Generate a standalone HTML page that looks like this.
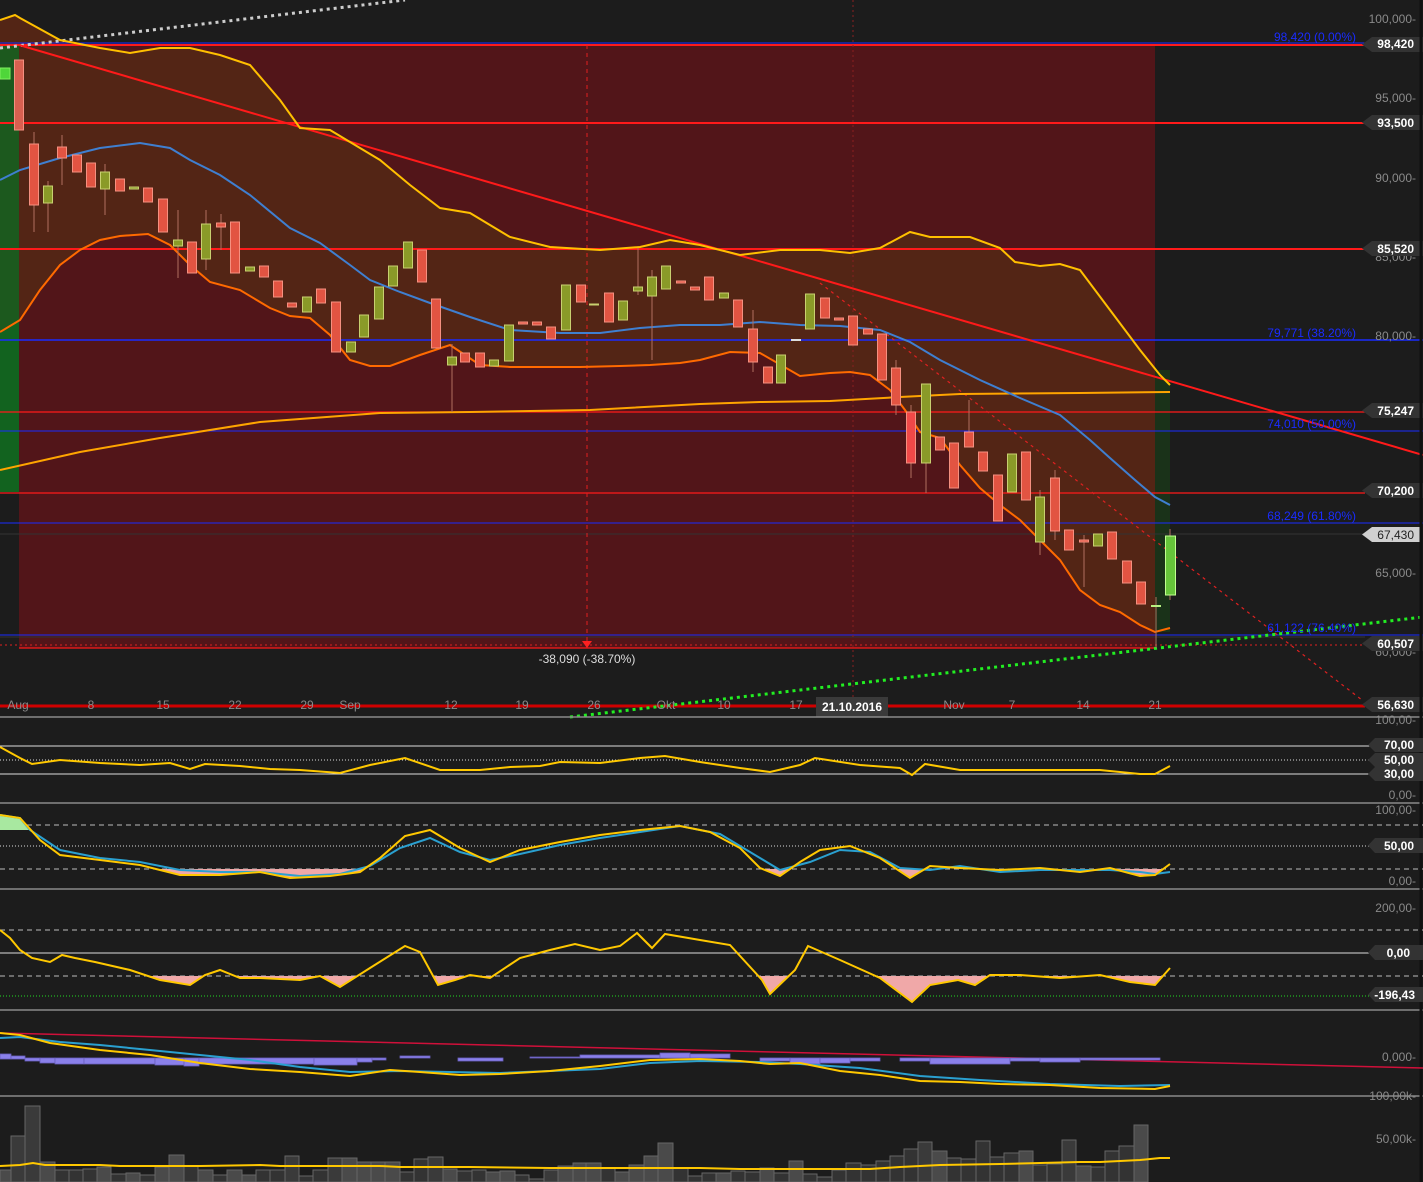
<!DOCTYPE html>
<html><head><meta charset="utf-8"><style>
html,body{margin:0;padding:0;background:#1c1c1c;overflow:hidden;}
svg{display:block}
text{font-family:"Liberation Sans",sans-serif}
.ax{fill:#8a8a8a;font-size:12px;text-anchor:end}
.lb{fill:#fff;font-size:12px;font-weight:bold;text-anchor:end}
.dt{fill:#8a8a8a;font-size:12px;text-anchor:middle}
.fb{fill:#1a2cff;font-size:12px;text-anchor:end}
</style></head><body>
<svg width="1423" height="1182" viewBox="0 0 1423 1182" xmlns="http://www.w3.org/2000/svg">
<defs>
<clipPath id="stc"><rect x="0" y="869" width="1170" height="25"/></clipPath>
<clipPath id="ccc"><rect x="0" y="976" width="1170" height="34"/></clipPath>
</defs>
<rect width="1423" height="1182" fill="#1c1c1c"/>
<rect x="19" y="45" width="1136" height="603" fill="#521519"/>
<rect x="0" y="45" width="19" height="447" fill="#136320"/>
<path d="M0,20 L15,15 L20,18 L20,45 L0,45Z" fill="#173517"/>
<path d="M0,20 L15,15 L20,18 L60,40 L100,48 L130,53 L160,48 L190,48 L220,55 L250,65 L280,100 L300,128 L330,130 L360,148 L380,160 L410,185 L440,208 L470,213 L510,237 L550,247 L600,250 L640,247 L670,240 L700,245 L740,255 L780,250 L820,250 L850,253 L880,248 L910,232 L930,237 L970,237 L1000,248 L1015,262 L1040,266 L1060,264 L1080,270 L1110,310 L1140,350 L1160,375 L1170,385 L1170,628 L1155,632 L1140,625 L1120,612 L1100,605 L1080,590 L1060,560 L1040,540 L1020,520 L1000,505 L980,488 L960,465 L940,438 L920,432 L905,410 L890,390 L870,375 L850,372 L830,373 L800,376 L760,353 L730,352 L700,360 L680,363 L650,365 L620,366 L580,367 L540,367 L510,367 L480,365 L450,345 L420,355 L390,366 L370,366 L350,360 L330,335 L310,318 L290,316 L270,308 L240,290 L210,282 L190,265 L170,245 L148,234 L120,236 L100,240 L80,250 L60,265 L40,290 L20,320 L0,332Z" fill="#532515"/>
<rect x="1155" y="370" width="15" height="262" fill="#1a3219"/>
<rect x="0" y="45" width="19" height="447" fill="#136320" opacity="0.85"/>
<g stroke="#ff1a1a" stroke-width="2">
<line x1="0" y1="45" x2="1365" y2="45"/><line x1="0" y1="123" x2="1365" y2="123"/><line x1="0" y1="249" x2="1365" y2="249"/>
</g>
<g stroke="#ff1a1a" stroke-width="1.3">
<line x1="0" y1="412" x2="1365" y2="412"/><line x1="0" y1="493" x2="1365" y2="493"/><line x1="19" y1="648" x2="1155" y2="648"/>
</g>
<line x1="0" y1="645" x2="1365" y2="645" stroke="#e02020" stroke-width="1" stroke-dasharray="2,3"/>
<line x1="0" y1="706" x2="1365" y2="706" stroke="#d00000" stroke-width="3"/>
<g stroke="#1a2cff" stroke-width="1">
<line x1="0" y1="43" x2="1365" y2="43"/><line x1="0" y1="431" x2="1423" y2="431"/><line x1="0" y1="523" x2="1423" y2="523"/><line x1="0" y1="635" x2="1423" y2="635"/>
</g>
<line x1="0" y1="340" x2="1423" y2="340" stroke="#1a2cff" stroke-width="1.5"/>
<g stroke="#333" stroke-width="1"><line x1="0" y1="534" x2="1365" y2="534"/><line x1="0" y1="637" x2="1365" y2="637"/></g>
<line x1="587" y1="45" x2="587" y2="645" stroke="#e02020" stroke-dasharray="4,4"/>
<line x1="853" y1="0" x2="853" y2="717" stroke="#8a2020" stroke-dasharray="2,3"/>
<path d="M582,641 L592,641 L587,648Z" fill="#ff2020"/>
<text x="587" y="663" fill="#ddd" font-size="12" text-anchor="middle">-38,090 (-38.70%)</text>
<line x1="0" y1="48" x2="405" y2="0" stroke="#ccc" stroke-width="3" stroke-dasharray="3,4"/>
<line x1="19" y1="45" x2="1423" y2="455" stroke="#ff1a1a" stroke-width="2"/>
<line x1="820" y1="283" x2="1362" y2="700" stroke="#e02020" stroke-width="1.2" stroke-dasharray="3,4"/>
<line x1="570" y1="717" x2="1423" y2="617" stroke="#22ee22" stroke-width="3" stroke-dasharray="3,4"/>
<polyline fill="none" stroke="#ffa500" stroke-width="2" points="0,470 80,452 160,438 260,422 380,413 470,412 590,410 700,404 760,402 830,401 900,397 960,394 1080,393 1170,392"/>
<polyline fill="none" stroke="#ffc000" stroke-width="2" points="0,20 15,15 20,18 60,40 100,48 130,53 160,48 190,48 220,55 250,65 280,100 300,128 330,130 360,148 380,160 410,185 440,208 470,213 510,237 550,247 600,250 640,247 670,240 700,245 740,255 780,250 820,250 850,253 880,248 910,232 930,237 970,237 1000,248 1015,262 1040,266 1060,264 1080,270 1110,310 1140,350 1160,375 1170,385"/>
<polyline fill="none" stroke="#3f7fd0" stroke-width="2" points="0,180 20,170 60,158 100,148 140,143 170,148 190,160 220,175 250,195 290,228 320,243 350,265 370,280 400,292 430,303 470,317 510,330 560,333 600,333 640,328 680,325 720,325 760,322 800,325 840,326 880,330 910,342 940,360 980,380 1020,398 1060,415 1090,440 1110,458 1135,480 1155,497 1170,505"/>
<polyline fill="none" stroke="#ff6a00" stroke-width="2" points="0,332 20,320 40,290 60,265 80,250 100,240 120,236 148,234 170,245 190,265 210,282 240,290 270,308 290,316 310,318 330,335 350,360 370,366 390,366 420,355 450,345 480,365 510,367 540,367 580,367 620,366 650,365 680,363 700,360 730,352 760,353 800,376 830,373 850,372 870,375 890,390 905,410 920,432 940,438 960,465 980,488 1000,505 1020,520 1040,540 1060,560 1080,590 1100,605 1120,612 1140,625 1155,632 1170,628"/>
<g stroke="#b07060" stroke-width="1">
<line x1="34" y1="132" x2="34" y2="232"/><line x1="48" y1="181" x2="48" y2="232"/><line x1="62" y1="135" x2="62" y2="185"/><line x1="105" y1="164" x2="105" y2="215"/><line x1="178" y1="210" x2="178" y2="278"/><line x1="206" y1="210" x2="206" y2="270"/><line x1="221" y1="214" x2="221" y2="250"/><line x1="452" y1="344" x2="452" y2="412"/><line x1="638" y1="248" x2="638" y2="295"/><line x1="652" y1="270" x2="652" y2="360"/><line x1="753" y1="310" x2="753" y2="372"/><line x1="926" y1="384" x2="926" y2="493"/><line x1="969" y1="400" x2="969" y2="447"/><line x1="1084" y1="535" x2="1084" y2="587"/><line x1="1156" y1="597" x2="1156" y2="648"/><line x1="1170" y1="529" x2="1170" y2="600"/><line x1="1040" y1="490" x2="1040" y2="555"/><line x1="1055" y1="470" x2="1055" y2="540"/><line x1="896" y1="360" x2="896" y2="415"/><line x1="911" y1="405" x2="911" y2="478"/>
</g>
<g fill="#e25442" stroke="#f59080" stroke-width="1">
<rect x="14.5" y="60" width="9" height="70" fill="#d86050"/>
<rect x="29.5" y="144" width="9" height="61"/><rect x="57.5" y="147" width="9" height="11"/><rect x="72.5" y="155" width="9" height="17"/><rect x="86.5" y="163" width="9" height="24"/><rect x="115.5" y="179" width="9" height="12"/><rect x="143.5" y="188" width="9" height="14"/><rect x="158.5" y="199" width="9" height="33"/><rect x="187.5" y="242" width="9" height="31"/><rect x="216.5" y="223" width="9" height="4"/><rect x="230.5" y="222" width="9" height="51"/><rect x="259.5" y="266" width="9" height="11"/><rect x="273.5" y="281" width="9" height="16"/><rect x="287.5" y="303" width="9" height="4"/><rect x="316.5" y="289" width="9" height="14"/><rect x="331.5" y="302" width="9" height="50"/><rect x="417.5" y="250" width="9" height="32"/><rect x="431.5" y="299" width="9" height="49"/><rect x="460.5" y="353" width="9" height="9"/><rect x="475.5" y="353" width="9" height="14"/><rect x="518.5" y="322" width="9" height="2"/><rect x="532.5" y="322" width="9" height="3"/><rect x="546.5" y="327" width="9" height="12"/><rect x="576.5" y="285" width="9" height="17"/><rect x="604.5" y="293" width="9" height="29"/><rect x="676.5" y="281" width="9" height="2"/><rect x="690.5" y="287" width="9" height="3"/><rect x="704.5" y="277" width="9" height="23"/><rect x="733.5" y="300" width="9" height="27"/><rect x="748.5" y="329" width="9" height="33"/><rect x="763.5" y="367" width="9" height="16"/><rect x="820.5" y="298" width="9" height="20"/><rect x="834.5" y="318" width="9" height="2"/><rect x="848.5" y="316" width="9" height="29"/><rect x="863.5" y="329" width="9" height="5"/><rect x="877.5" y="334" width="9" height="46"/><rect x="891.5" y="368" width="9" height="37"/><rect x="906.5" y="412" width="9" height="51" fill="#f04848"/><rect x="935.5" y="437" width="9" height="13"/><rect x="949.5" y="443" width="9" height="45"/><rect x="964.5" y="432" width="9" height="15"/><rect x="978.5" y="452" width="9" height="19"/><rect x="993.5" y="475" width="9" height="46"/><rect x="1021.5" y="452" width="9" height="48"/><rect x="1050.5" y="478" width="9" height="53"/><rect x="1064.5" y="530" width="9" height="20"/><rect x="1079.5" y="540" width="9" height="2"/><rect x="1107.5" y="532" width="9" height="27"/><rect x="1122.5" y="561" width="9" height="22"/><rect x="1136.5" y="582" width="9" height="22"/>
</g>
<g fill="#8a9a28" stroke="#c8d070" stroke-width="1">
<rect x="43.5" y="186" width="9" height="17"/><rect x="100.5" y="172" width="9" height="17"/><rect x="129.5" y="187" width="9" height="2"/><rect x="173.5" y="240" width="9" height="6"/><rect x="201.5" y="224" width="9" height="35"/><rect x="245.5" y="267" width="9" height="4"/><rect x="302.5" y="297" width="9" height="15"/><rect x="346.5" y="342" width="9" height="10"/><rect x="359.5" y="315" width="9" height="22"/><rect x="374.5" y="287" width="9" height="32"/><rect x="388.5" y="266" width="9" height="20"/><rect x="403.5" y="242" width="9" height="26"/><rect x="447.5" y="357" width="9" height="8"/><rect x="489.5" y="360" width="9" height="6"/><rect x="504.5" y="325" width="9" height="36"/><rect x="561.5" y="285" width="9" height="45"/><rect x="589.5" y="304" width="9" height="1"/><rect x="618.5" y="301" width="9" height="19"/><rect x="633.5" y="287" width="9" height="4"/><rect x="647.5" y="277" width="9" height="19"/><rect x="661.5" y="266" width="9" height="23"/><rect x="719.5" y="293" width="9" height="5"/><rect x="776.5" y="355" width="9" height="28"/><rect x="805.5" y="294" width="9" height="35"/><rect x="921.5" y="384" width="9" height="79"/><rect x="1007.5" y="454" width="9" height="38"/><rect x="1035.5" y="497" width="9" height="45"/><rect x="1093.5" y="534" width="9" height="12"/>
</g>
<rect x="791" y="339" width="10" height="2" fill="#ddd"/>
<rect x="0" y="68" width="10" height="11" fill="#4fd63a" stroke="#80f060"/>
<rect x="1151" y="605" width="10" height="2" fill="#b8f080"/>
<rect x="1165.5" y="536" width="10" height="59" fill="#66c43a" stroke="#c0ff90"/>
<text class="fb" x="1356" y="41">98,420 (0.00%)</text>
<text class="fb" x="1356" y="337">79,771 (38.20%)</text>
<text class="fb" x="1356" y="428">74,010 (50.00%)</text>
<text class="fb" x="1356" y="520">68,249 (61.80%)</text>
<text class="fb" x="1356" y="632">61,122 (76.40%)</text>
<text class="ax" x="1416" y="23">100,000-</text><text class="ax" x="1416" y="102">95,000-</text><text class="ax" x="1416" y="182">90,000-</text><text class="ax" x="1416" y="261">85,000-</text><text class="ax" x="1416" y="340">80,000-</text><text class="ax" x="1416" y="577">65,000-</text><text class="ax" x="1416" y="656">60,000-</text>
<g fill="#333">
<path d="M1372,37 L1423,37 L1423,52 L1372,52 L1362,44.5Z"/><path d="M1372,115 L1423,115 L1423,130 L1372,130 L1362,122.5Z"/><path d="M1372,241 L1423,241 L1423,256 L1372,256 L1362,248.5Z"/><path d="M1372,403 L1423,403 L1423,418 L1372,418 L1362,410.5Z"/><path d="M1372,483 L1423,483 L1423,498 L1372,498 L1362,490.5Z"/><path d="M1372,636 L1423,636 L1423,651 L1372,651 L1362,643.5Z"/><path d="M1372,697 L1423,697 L1423,712 L1372,712 L1362,704.5Z"/>
</g>
<path d="M1372,527 L1420,527 L1420,542 L1372,542 L1362,534.5Z" fill="#d0d0d0"/>
<text class="lb" x="1414" y="48">98,420</text><text class="lb" x="1414" y="127">93,500</text><text class="lb" x="1414" y="253">85,520</text><text class="lb" x="1414" y="415">75,247</text><text class="lb" x="1414" y="495">70,200</text><text x="1414" y="539" font-size="12" text-anchor="end" fill="#222">67,430</text><text class="lb" x="1414" y="648">60,507</text><text class="lb" x="1414" y="709">56,630</text>
<g class="dt"><text x="18" y="709">Aug</text><text x="91" y="709">8</text><text x="163" y="709">15</text><text x="235" y="709">22</text><text x="307" y="709">29</text><text x="350" y="709">Sep</text><text x="451" y="709">12</text><text x="522" y="709">19</text><text x="594" y="709">26</text><text x="666" y="709">Okt</text><text x="724" y="709">10</text><text x="796" y="709">17</text><text x="954" y="709">Nov</text><text x="1012" y="709">7</text><text x="1083" y="709">14</text><text x="1155" y="709">21</text></g>
<rect x="816" y="697" width="72" height="20" fill="#3a3a3a"/>
<text x="852" y="711" fill="#fff" font-size="12" font-weight="bold" text-anchor="middle">21.10.2016</text>
<g stroke="#8a8a8a" stroke-width="1.5"><line x1="0" y1="717" x2="1423" y2="717"/><line x1="0" y1="803" x2="1423" y2="803"/><line x1="0" y1="889" x2="1423" y2="889"/><line x1="0" y1="1010" x2="1423" y2="1010"/><line x1="0" y1="1096" x2="1423" y2="1096"/></g>
<line x1="1421" y1="0" x2="1421" y2="1182" stroke="#111" stroke-width="3"/>
<line x1="0" y1="746" x2="1370" y2="746" stroke="#ddd"/><line x1="0" y1="760" x2="1370" y2="760" stroke="#ddd" stroke-dasharray="1,2"/><line x1="0" y1="774" x2="1370" y2="774" stroke="#ddd"/>
<polyline fill="none" stroke="#ffc800" stroke-width="2" points="0,747 20,758 32,764 60,760 100,763 140,765 170,763 190,769 205,764 240,766 270,769 300,770 340,773 370,765 405,758 440,770 480,770 510,767 540,766 560,762 600,763 640,758 665,756 700,762 740,768 770,772 800,765 815,758 860,765 900,768 912,775 925,764 960,770 1000,770 1040,770 1100,770 1140,774 1155,774 1170,766"/>
<g fill="#333"><path d="M1375,738 L1423,738 L1423,752 L1375,752 L1368,745Z"/><path d="M1375,753 L1423,753 L1423,767 L1375,767 L1368,760Z"/><path d="M1375,767 L1423,767 L1423,781 L1375,781 L1368,774Z"/></g>
<text class="lb" x="1414" y="749">70,00</text><text class="lb" x="1414" y="764">50,00</text><text class="lb" x="1414" y="778">30,00</text>
<text class="ax" x="1416" y="724">100,00-</text><text class="ax" x="1416" y="799">0,00-</text>
<line x1="0" y1="825" x2="1423" y2="825" stroke="#bbb" stroke-dasharray="5,4"/><line x1="0" y1="846" x2="1370" y2="846" stroke="#ddd" stroke-dasharray="1,2"/><line x1="0" y1="869" x2="1423" y2="869" stroke="#bbb" stroke-dasharray="5,4"/>
<path d="M0,815 L20,818 L30,830 L0,830Z" fill="#a8e8a0"/>
<polygon clip-path="url(#stc)" fill="#f0a8a8" points="0,815 20,818 40,840 60,855 100,860 140,865 180,875 220,875 260,872 290,878 330,876 360,872 380,858 405,836 430,830 460,848 490,862 520,850 560,842 600,835 640,830 680,826 710,832 740,848 760,868 780,876 800,862 820,850 850,846 880,858 910,878 930,866 960,868 1000,870 1040,868 1080,872 1110,868 1140,876 1155,875 1170,864 1170,869 0,869"/>
<polyline fill="none" stroke="#2aa0d0" stroke-width="2" points="0,815 20,818 30,830 60,850 100,858 140,862 180,870 220,872 260,872 300,876 340,874 370,866 400,848 430,838 460,852 490,860 520,854 560,845 600,838 640,832 680,826 720,834 750,852 780,870 810,862 840,850 870,852 900,868 930,870 960,866 1000,872 1040,870 1080,870 1110,870 1140,872 1155,874 1170,872"/>
<polyline fill="none" stroke="#ffc800" stroke-width="2" points="0,815 20,818 40,840 60,855 100,860 140,865 180,875 220,875 260,872 290,878 330,876 360,872 380,858 405,836 430,830 460,848 490,862 520,850 560,842 600,835 640,830 680,826 710,832 740,848 760,868 780,876 800,862 820,850 850,846 880,858 910,878 930,866 960,868 1000,870 1040,868 1080,872 1110,868 1140,876 1155,875 1170,864"/>
<path d="M1375,838 L1423,838 L1423,853 L1375,853 L1368,845.5Z" fill="#333"/>
<text class="lb" x="1414" y="850">50,00</text>
<text class="ax" x="1416" y="814">100,00-</text><text class="ax" x="1416" y="885">0,00-</text>
<line x1="0" y1="930" x2="1423" y2="930" stroke="#bbb" stroke-dasharray="5,4"/><line x1="0" y1="953" x2="1370" y2="953" stroke="#ddd"/><line x1="0" y1="976" x2="1423" y2="976" stroke="#bbb" stroke-dasharray="5,4"/><line x1="0" y1="996" x2="1370" y2="996" stroke="#22dd22" stroke-dasharray="1,2"/>
<polygon clip-path="url(#ccc)" fill="#f0a8a8" points="0,930 10,938 20,950 32,958 50,962 62,955 75,958 95,962 130,970 160,980 190,985 205,975 220,970 240,978 260,978 300,980 320,976 340,987 370,968 405,946 420,952 438,985 455,980 470,975 490,978 520,958 550,950 575,944 600,950 620,946 637,933 652,948 665,934 700,940 730,945 762,980 770,994 795,970 808,946 840,960 880,978 912,1002 930,985 958,980 975,985 990,975 1020,975 1060,978 1100,975 1130,982 1155,985 1170,968 1170,976 0,976"/>
<polyline fill="none" stroke="#ffc800" stroke-width="2" points="0,930 10,938 20,950 32,958 50,962 62,955 75,958 95,962 130,970 160,980 190,985 205,975 220,970 240,978 260,978 300,980 320,976 340,987 370,968 405,946 420,952 438,985 455,980 470,975 490,978 520,958 550,950 575,944 600,950 620,946 637,933 652,948 665,934 700,940 730,945 762,980 770,994 795,970 808,946 840,960 880,978 912,1002 930,985 958,980 975,985 990,975 1020,975 1060,978 1100,975 1130,982 1155,985 1170,968"/>
<path d="M1375,945 L1423,945 L1423,960 L1375,960 L1368,952.5Z" fill="#333"/><path d="M1375,987 L1423,987 L1423,1002 L1375,1002 L1368,994.5Z" fill="#333"/>
<text class="lb" x="1410" y="957">0,00</text><text class="lb" x="1415" y="999">-196,43</text>
<text class="ax" x="1416" y="912">200,00-</text>
<line x1="0" y1="1033" x2="1423" y2="1068" stroke="#d0103a" stroke-width="1.5"/>
<g fill="#8a80ea" stroke="#6a60c0" stroke-width="0.8">
<rect x="0" y="1054" width="11" height="5"/><rect x="11" y="1056" width="14" height="3"/><rect x="25" y="1058" width="15" height="3"/><rect x="40" y="1058" width="15" height="5"/><rect x="55" y="1058" width="29" height="6"/><rect x="84" y="1058" width="71" height="6"/><rect x="155" y="1058" width="29" height="7"/><rect x="184" y="1058" width="15" height="8"/><rect x="199" y="1058" width="115" height="6"/><rect x="314" y="1058" width="43" height="7"/><rect x="357" y="1058" width="15" height="4"/><rect x="372" y="1058" width="14" height="2"/><rect x="400" y="1056" width="30" height="2"/><rect x="458" y="1058" width="45" height="3"/><rect x="530" y="1057" width="50" height="1"/><rect x="580" y="1055" width="80" height="3"/><rect x="660" y="1053" width="30" height="5"/><rect x="690" y="1054" width="40" height="4"/><rect x="760" y="1058" width="30" height="3"/><rect x="790" y="1058" width="30" height="6"/><rect x="820" y="1058" width="30" height="5"/><rect x="850" y="1058" width="30" height="3"/><rect x="900" y="1058" width="30" height="3"/><rect x="930" y="1058" width="80" height="6"/><rect x="1010" y="1058" width="30" height="3"/><rect x="1040" y="1058" width="40" height="4"/><rect x="1080" y="1058" width="80" height="2"/>
</g>
<polyline fill="none" stroke="#2aa0d0" stroke-width="2" points="0,1038 20,1037 60,1042 100,1045 150,1050 200,1055 250,1060 300,1067 350,1072 400,1071 450,1072 500,1073 550,1071 600,1069 650,1063 700,1061 760,1062 800,1064 860,1068 920,1076 980,1080 1050,1084 1120,1086 1170,1085"/>
<polyline fill="none" stroke="#ffc800" stroke-width="2" points="0,1033 20,1035 50,1043 100,1050 150,1055 200,1063 250,1069 300,1072 350,1076 390,1070 420,1072 460,1075 500,1074 550,1071 600,1066 650,1060 700,1059 740,1061 770,1064 800,1063 840,1071 880,1075 920,1081 960,1082 1000,1084 1050,1085 1100,1088 1155,1089 1170,1086"/>
<text class="ax" x="1416" y="1061">0,000-</text>
<g stroke="#666" stroke-width="1">
<rect x="0" y="1170" width="11" height="12" fill="#4a4a4a"/><rect x="11" y="1136" width="14" height="46" fill="#3a3a3a"/><rect x="25" y="1106" width="15" height="76" fill="#3a3a3a"/><rect x="40" y="1162" width="15" height="20" fill="#4a4a4a"/><rect x="55" y="1170" width="14" height="12" fill="#333"/><rect x="69" y="1170" width="14" height="12" fill="#333"/><rect x="83" y="1169" width="14" height="13" fill="#333"/><rect x="97" y="1167" width="14" height="15" fill="#4a4a4a"/><rect x="111" y="1174" width="15" height="8" fill="#333"/><rect x="126" y="1173" width="14" height="9" fill="#4a4a4a"/><rect x="140" y="1175" width="15" height="7" fill="#333"/><rect x="155" y="1167" width="14" height="15" fill="#4a4a4a"/><rect x="169" y="1155" width="15" height="27" fill="#4a4a4a"/><rect x="184" y="1166" width="14" height="16" fill="#333"/><rect x="198" y="1170" width="15" height="12" fill="#4a4a4a"/><rect x="213" y="1175" width="14" height="7" fill="#333"/><rect x="227" y="1170" width="15" height="12" fill="#4a4a4a"/><rect x="242" y="1175" width="14" height="7" fill="#4a4a4a"/><rect x="256" y="1170" width="14" height="12" fill="#333"/><rect x="270" y="1170" width="15" height="12" fill="#333"/><rect x="285" y="1156" width="14" height="26" fill="#3a3a3a"/><rect x="299" y="1176" width="14" height="6" fill="#333"/><rect x="313" y="1170" width="15" height="12" fill="#333"/><rect x="328" y="1158" width="14" height="24" fill="#3a3a3a"/><rect x="342" y="1158" width="15" height="24" fill="#4a4a4a"/><rect x="357" y="1162" width="14" height="20" fill="#4a4a4a"/><rect x="371" y="1162" width="14" height="20" fill="#4a4a4a"/><rect x="385" y="1162" width="15" height="20" fill="#4a4a4a"/><rect x="400" y="1172" width="14" height="10" fill="#333"/><rect x="414" y="1159" width="14" height="23" fill="#333"/><rect x="428" y="1157" width="15" height="25" fill="#3a3a3a"/><rect x="443" y="1169" width="14" height="13" fill="#4a4a4a"/><rect x="457" y="1171" width="15" height="11" fill="#333"/><rect x="472" y="1170" width="14" height="12" fill="#333"/><rect x="486" y="1172" width="14" height="10" fill="#4a4a4a"/><rect x="500" y="1171" width="15" height="11" fill="#4a4a4a"/><rect x="515" y="1175" width="14" height="7" fill="#333"/><rect x="529" y="1179" width="15" height="3" fill="#333"/><rect x="544" y="1170" width="14" height="12" fill="#3a3a3a"/><rect x="558" y="1166" width="15" height="16" fill="#4a4a4a"/><rect x="573" y="1163" width="13" height="19" fill="#4a4a4a"/><rect x="586" y="1163" width="15" height="19" fill="#4a4a4a"/><rect x="601" y="1168" width="14" height="14" fill="#333"/><rect x="615" y="1172" width="14" height="10" fill="#4a4a4a"/><rect x="629" y="1165" width="15" height="17" fill="#4a4a4a"/><rect x="644" y="1156" width="14" height="26" fill="#4a4a4a"/><rect x="658" y="1143" width="15" height="39" fill="#4a4a4a"/><rect x="673" y="1168" width="15" height="14" fill="#333"/><rect x="688" y="1176" width="14" height="6" fill="#333"/><rect x="702" y="1173" width="14" height="9" fill="#333"/><rect x="716" y="1173" width="15" height="9" fill="#4a4a4a"/><rect x="731" y="1171" width="14" height="11" fill="#333"/><rect x="745" y="1172" width="15" height="10" fill="#333"/><rect x="760" y="1168" width="14" height="14" fill="#4a4a4a"/><rect x="774" y="1173" width="15" height="9" fill="#333"/><rect x="789" y="1161" width="14" height="21" fill="#4a4a4a"/><rect x="803" y="1174" width="14" height="8" fill="#333"/><rect x="817" y="1177" width="15" height="5" fill="#333"/><rect x="832" y="1170" width="14" height="12" fill="#333"/><rect x="846" y="1163" width="15" height="19" fill="#333"/><rect x="861" y="1165" width="15" height="17" fill="#333"/><rect x="876" y="1161" width="14" height="21" fill="#333"/><rect x="890" y="1156" width="14" height="26" fill="#333"/><rect x="904" y="1149" width="14" height="33" fill="#333"/><rect x="918" y="1142" width="14" height="40" fill="#3a3a3a"/><rect x="932" y="1151" width="15" height="31" fill="#4a4a4a"/><rect x="947" y="1158" width="14" height="24" fill="#333"/><rect x="961" y="1159" width="15" height="23" fill="#333"/><rect x="976" y="1141" width="14" height="41" fill="#333"/><rect x="990" y="1157" width="14" height="25" fill="#333"/><rect x="1004" y="1153" width="15" height="29" fill="#333"/><rect x="1019" y="1151" width="14" height="31" fill="#4a4a4a"/><rect x="1033" y="1165" width="14" height="17" fill="#333"/><rect x="1047" y="1164" width="15" height="18" fill="#333"/><rect x="1062" y="1140" width="14" height="42" fill="#3a3a3a"/><rect x="1076" y="1166" width="15" height="16" fill="#4a4a4a"/><rect x="1091" y="1167" width="14" height="15" fill="#333"/><rect x="1105" y="1151" width="14" height="31" fill="#333"/><rect x="1119" y="1146" width="15" height="36" fill="#333"/><rect x="1134" y="1125" width="14" height="57" fill="#4a4a4a"/>
</g>
<polyline fill="none" stroke="#ffc800" stroke-width="2" points="0,1166 20,1165 33,1163 45,1165 100,1165 120,1166 200,1166 260,1165 280,1166 350,1166 380,1166 400,1167 470,1167 550,1168 640,1168 700,1168 740,1169 790,1169 870,1169 900,1167 940,1165 1000,1164 1040,1163 1080,1162 1100,1162 1140,1160 1160,1158 1170,1158"/>
<text class="ax" x="1416" y="1100">100,00k-</text>
<text class="ax" x="1416" y="1143">50,00k-</text>
</svg>
</body></html>
